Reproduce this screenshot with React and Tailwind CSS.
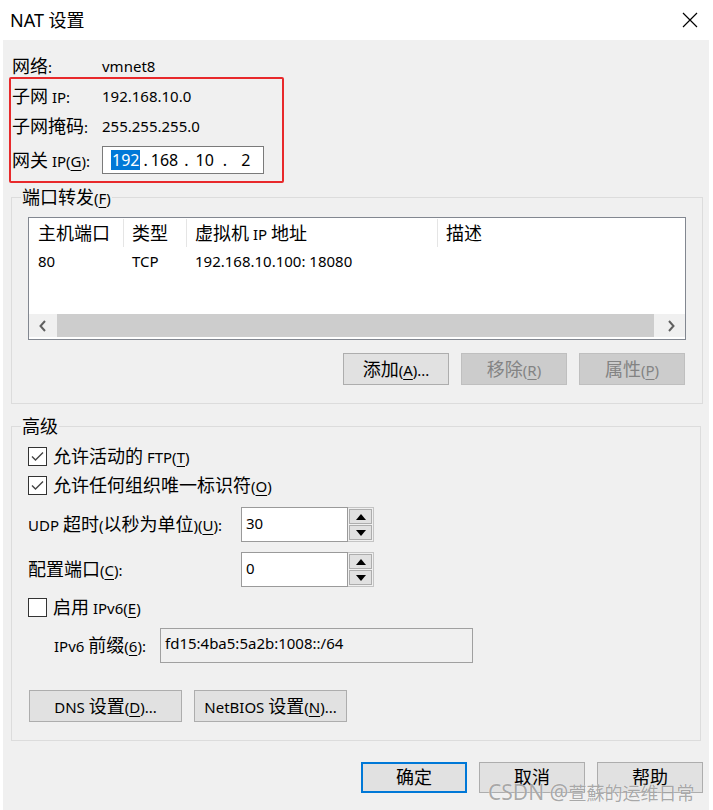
import React from "react";
import clsx from "clsx";

const CJK_RUN = /([\u3400-\u9fff]+)/;

// Windows draws the CJK glyphs a bit larger than the latin UI font
function Zh({ children }) {
  return (
    <span>
      {String(children)
        .split(CJK_RUN)
        .map((part, i) =>
          i % 2 ? (
            <span key={i} className="text-[18px]">
              {part}
            </span>
          ) : (
            part
          )
        )}
    </span>
  );
}

// label with an underlined access key, e.g. 网关 IP(G):
function Hot({ text, k, tail = ")" }) {
  return (
    <span>
      <Zh>{text}</Zh>(<span className="underline underline-offset-[3px]">{k}</span>
      {tail}
    </span>
  );
}

function Btn({ className = "", disabled = false, primary = false, children }) {
  return (
    <button
      type="button"
      disabled={disabled}
      className={clsx(
        "flex items-center justify-center",
        primary
          ? "border-2 border-[#0078d7] bg-[#e1e1e1]"
          : disabled
          ? "border border-[#bfbfbf] bg-[#cccccc] text-[#838383]"
          : "border border-[#adadad] bg-[#e1e1e1]",
        className
      )}
    >
      {children}
    </button>
  );
}

function Check({ checked = false, children }) {
  return (
    <div className="flex h-[20px] items-center gap-[6px]">
      <span className="flex h-[19px] w-[19px] items-center justify-center border border-[#333333] bg-white">
        {checked && (
          <svg width="13" height="11" viewBox="0 0 13 11">
            <path d="M1 5.5 L4.5 9 L12 1.5" fill="none" stroke="#444" strokeWidth="1.4" />
          </svg>
        )}
      </span>
      <span>{children}</span>
    </div>
  );
}

function Tri({ up = false }) {
  return (
    <svg width="10" height="6" viewBox="0 0 10 6">
      <path d={up ? "M0 6 L5 0 L10 6Z" : "M0 0 L10 0 L5 6Z"} fill="#000" />
    </svg>
  );
}

function Spin({ value }) {
  return (
    <div className="flex">
      <div className="h-[35px] w-[107px] border border-[#9a9a9a] bg-white pl-[4px] pt-[5px]">{value}</div>
      <div className="flex h-[35px] w-[26px] flex-col gap-[1px] border border-l-0 border-[#c4c4c4] bg-[#f0f0f0] p-[1px]">
        <span className="flex flex-1 items-center justify-center border border-[#adadad] bg-[#e1e1e1]">
          <Tri up />
        </span>
        <span className="flex flex-1 items-center justify-center border border-[#adadad] bg-[#e1e1e1]">
          <Tri />
        </span>
      </div>
    </div>
  );
}

function Chevron({ right = false }) {
  return (
    <svg width="8" height="12" viewBox="0 0 8 12">
      <path d={right ? "M2 1 L6.5 6 L2 11" : "M6 1 L1.5 6 L6 11"} fill="none" stroke="#606060" strokeWidth="2" />
    </svg>
  );
}

export default function App() {
  return (
    <div className="relative flex h-[810px] w-[713px] flex-col overflow-hidden bg-white font-['Noto_Sans','Noto_Sans_CJK_SC',sans-serif] text-[15px] leading-[20px] text-black">
      {/* title bar */}
      <div className="flex h-[40px] shrink-0 items-center justify-between pl-[10px] pr-[15px]">
        <span className="text-[18px]">NAT 设置</span>
        <svg width="16" height="16" viewBox="0 0 16 16">
          <path d="M1 1 L15 15 M15 1 L1 15" stroke="#000" strokeWidth="1.2" />
        </svg>
      </div>

      <div className="ml-[3px] flex w-[706px] flex-1 flex-col bg-[#f0f0f0]">
        {/* network info */}
        <div className="relative pl-[9px] pt-[11px]">
          <div className="flex h-[30px] items-center">
            <span className="w-[90px]">
              <Zh>网络:</Zh>
            </span>
            <span>vmnet8</span>
          </div>
          <div className="flex h-[30px] items-center">
            <span className="w-[90px]">
              <Zh>子网 IP:</Zh>
            </span>
            <span>192.168.10.0</span>
          </div>
          <div className="flex h-[30px] items-center">
            <span className="w-[90px]">
              <Zh>子网掩码:</Zh>
            </span>
            <span>255.255.255.0</span>
          </div>
          <div className="mt-[5px] flex h-[28px] items-center">
            <span className="w-[90px]">
              <Hot text="网关 IP" k="G" tail="):" />
            </span>
            <div className="flex h-[28px] w-[162px] items-center border border-[#7a7a7a] bg-white pl-[8px] text-[16px]">
              <span className="bg-[#0078d7] px-[1px] text-white">192</span>
              <span className="ml-[3px]">.</span>
              <span className="ml-[3px]">168</span>
              <span className="ml-[6px]">.</span>
              <span className="ml-[7px]">10</span>
              <span className="ml-[9px]">.</span>
              <span className="ml-[14px]">2</span>
            </div>
          </div>
          {/* red annotation frame */}
          <div className="pointer-events-none absolute left-[6px] top-[37px] h-[106px] w-[275px] rounded-[2px] border-2 border-[#e8292b]" />
        </div>

        {/* port forwarding */}
        <fieldset className="mx-[8px] mt-[13px] border border-[#dcdcdc]">
          <legend className="ml-[9px] px-[1px] leading-[20px]">
            <Hot text="端口转发" k="F" />
          </legend>
          <div className="px-[16px] pb-[18px] pt-[9px]">
            <div className="flex h-[123px] w-[658px] flex-col border border-[#828790] bg-white">
              <div className="flex h-[30px] shrink-0">
                <div className="my-[1px] flex w-[95px] items-center border-r border-[#e5e5e5] pl-[9px]">
                  <Zh>主机端口</Zh>
                </div>
                <div className="my-[1px] flex w-[63px] items-center border-r border-[#e5e5e5] pl-[8px]">
                  <Zh>类型</Zh>
                </div>
                <div className="my-[1px] flex w-[251px] items-center border-r border-[#e5e5e5] pl-[8px]">
                  <Zh>虚拟机 IP 地址</Zh>
                </div>
                <div className="flex flex-1 items-center pl-[8px]">
                  <Zh>描述</Zh>
                </div>
              </div>
              <div className="flex h-[26px] items-center">
                <span className="w-[95px] pl-[9px]">80</span>
                <span className="w-[63px] pl-[8px]">TCP</span>
                <span className="pl-[8px]">192.168.10.100: 18080</span>
              </div>
              <div className="flex-1" />
              <div className="mb-[2px] flex h-[23px] bg-[#f0f0f0]">
                <span className="flex w-[28px] items-center justify-center">
                  <Chevron />
                </span>
                <span className="w-[597px] bg-[#cdcdcd]" />
                <span className="flex flex-1 items-center justify-end pr-[10px]">
                  <Chevron right />
                </span>
              </div>
            </div>
            <div className="mt-[13px] flex w-[658px] justify-end gap-[12px] pr-[1px]">
              <Btn className="h-[32px] w-[106px]">
                <Hot text="添加" k="A" tail=")..." />
              </Btn>
              <Btn disabled className="h-[32px] w-[106px]">
                <Hot text="移除" k="R" />
              </Btn>
              <Btn disabled className="h-[32px] w-[106px]">
                <Hot text="属性" k="P" />
              </Btn>
            </div>
          </div>
        </fieldset>

        {/* advanced */}
        <fieldset className="mx-[8px] mt-[12px] border border-[#dcdcdc]">
          <legend className="ml-[9px] px-[1px] leading-[20px]">
            <Zh>高级</Zh>
          </legend>
          <div className="flex flex-col pb-[18px] pl-[16px]">
            <div className="mt-[9px]">
              <Check checked>
                <Hot text="允许活动的 FTP" k="T" />
              </Check>
            </div>
            <div className="mt-[9px]">
              <Check checked>
                <Hot text="允许任何组织唯一标识符" k="O" />
              </Check>
            </div>
            <div className="mt-[12px] flex items-center">
              <span className="w-[213px]">
                <Hot text="UDP 超时(以秒为单位)" k="U" tail="):" />
              </span>
              <Spin value="30" />
            </div>
            <div className="mt-[10px] flex items-center">
              <span className="w-[213px]">
                <Hot text="配置端口" k="C" tail="):" />
              </span>
              <Spin value="0" />
            </div>
            <div className="mt-[10px]">
              <Check>
                <Hot text="启用 IPv6" k="E" />
              </Check>
            </div>
            <div className="ml-[26px] mt-[11px] flex items-center">
              <span className="w-[106px]">
                <Hot text="IPv6 前缀" k="6" tail="):" />
              </span>
              <div className="h-[35px] w-[313px] border border-[#a0a0a0] bg-[#f0f0f0] pl-[4px] pt-[4px]">
                fd15:4ba5:5a2b:1008::/64
              </div>
            </div>
            <div className="ml-[1px] mt-[27px] flex gap-[12px]">
              <Btn className="h-[32px] w-[153px]">
                <Hot text="DNS 设置" k="D" tail=")..." />
              </Btn>
              <Btn className="h-[32px] w-[153px]">
                <Hot text="NetBIOS 设置" k="N" tail=")..." />
              </Btn>
            </div>
          </div>
        </fieldset>

        {/* dialog buttons */}
        <div className="mt-[21px] flex justify-end gap-[12px] pr-[6px]">
          <Btn primary className="h-[31px] w-[106px]">
            <Zh>确定</Zh>
          </Btn>
          <Btn className="h-[31px] w-[106px]">
            <Zh>取消</Zh>
          </Btn>
          <Btn className="h-[31px] w-[106px]">
            <Zh>帮助</Zh>
          </Btn>
        </div>
      </div>

      {/* CSDN watermark */}
      <div className="pointer-events-none absolute left-[488px] top-[780px] whitespace-nowrap text-[21px] leading-[24px] text-[#6f6f6f]/60 [text-shadow:0_0_1px_#ffffff]">
        CSDN @<span className="text-[18px]">萱蘇的运维日常</span>
      </div>
    </div>
  );
}
